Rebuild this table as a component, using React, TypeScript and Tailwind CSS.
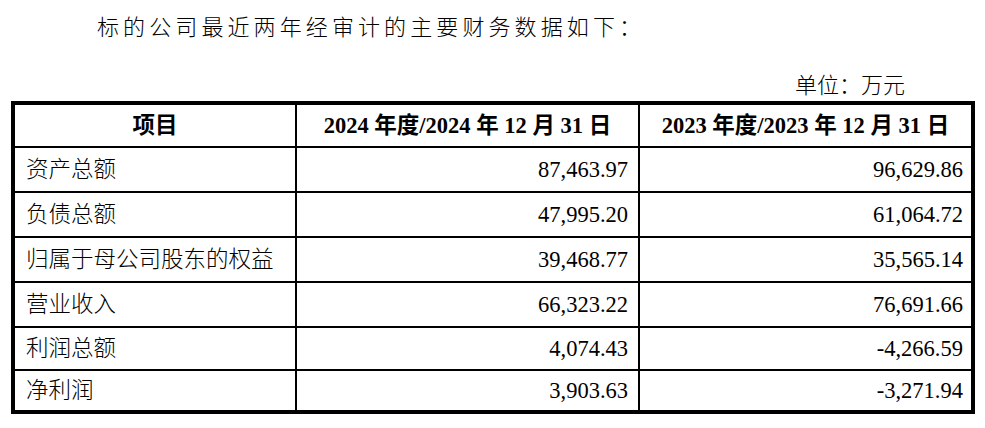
import React from "react";

const rows: { label: string; a: string; b: string; h: string }[] = [
  { label: "资产总额", a: "87,463.97", b: "96,629.86", h: "h-[43px]" },
  { label: "负债总额", a: "47,995.20", b: "61,064.72", h: "h-[43px]" },
  { label: "归属于母公司股东的权益", a: "39,468.77", b: "35,565.14", h: "h-[43px]" },
  { label: "营业收入", a: "66,323.22", b: "76,691.66", h: "h-[43px]" },
  { label: "利润总额", a: "4,074.43", b: "-4,266.59", h: "h-[41px]" },
  { label: "净利润", a: "3,903.63", b: "-3,271.94", h: "h-[39px]" },
];

export default function App() {
  return (
    <div
      className="w-[985px] h-[428px] bg-white text-black overflow-hidden"
      style={{ fontFamily: '"Liberation Serif", "Noto Sans CJK SC", serif' }}
    >
      <div className="pt-[11px] pl-[97px] text-[22px] leading-[33px] tracking-[4.1px] font-light whitespace-nowrap">
        标的公司最近两年经审计的主要财务数据如下：
      </div>
      <div className="mt-[27px] flex justify-end pr-[80px] text-[22px] leading-[30px] font-light whitespace-nowrap">
        单位：万元
      </div>
      <div className="ml-[11px] w-[964px] border-[4px] border-black bg-black grid grid-cols-[280px_341px_331px] gap-[2px]">
        <div className="bg-white h-[41px] flex items-center justify-center text-[22.5px] font-bold">
          项目
        </div>
        <div className="bg-white h-[41px] flex items-center justify-center text-[22.5px] font-bold whitespace-nowrap">
          2024 年度/2024 年 12 月 31 日
        </div>
        <div className="bg-white h-[41px] flex items-center justify-center text-[22.5px] font-bold whitespace-nowrap">
          2023 年度/2023 年 12 月 31 日
        </div>
        {rows.map((r) => (
          <React.Fragment key={r.label}>
            <div className={`bg-white ${r.h} flex items-center pl-[11px] text-[22.5px] font-light whitespace-nowrap`}>
              {r.label}
            </div>
            <div className={`bg-white ${r.h} flex items-center justify-end pr-[10px] text-[22.5px]`}>
              {r.a}
            </div>
            <div className={`bg-white ${r.h} flex items-center justify-end pr-[8px] text-[22.5px]`}>
              {r.b}
            </div>
          </React.Fragment>
        ))}
      </div>
    </div>
  );
}
